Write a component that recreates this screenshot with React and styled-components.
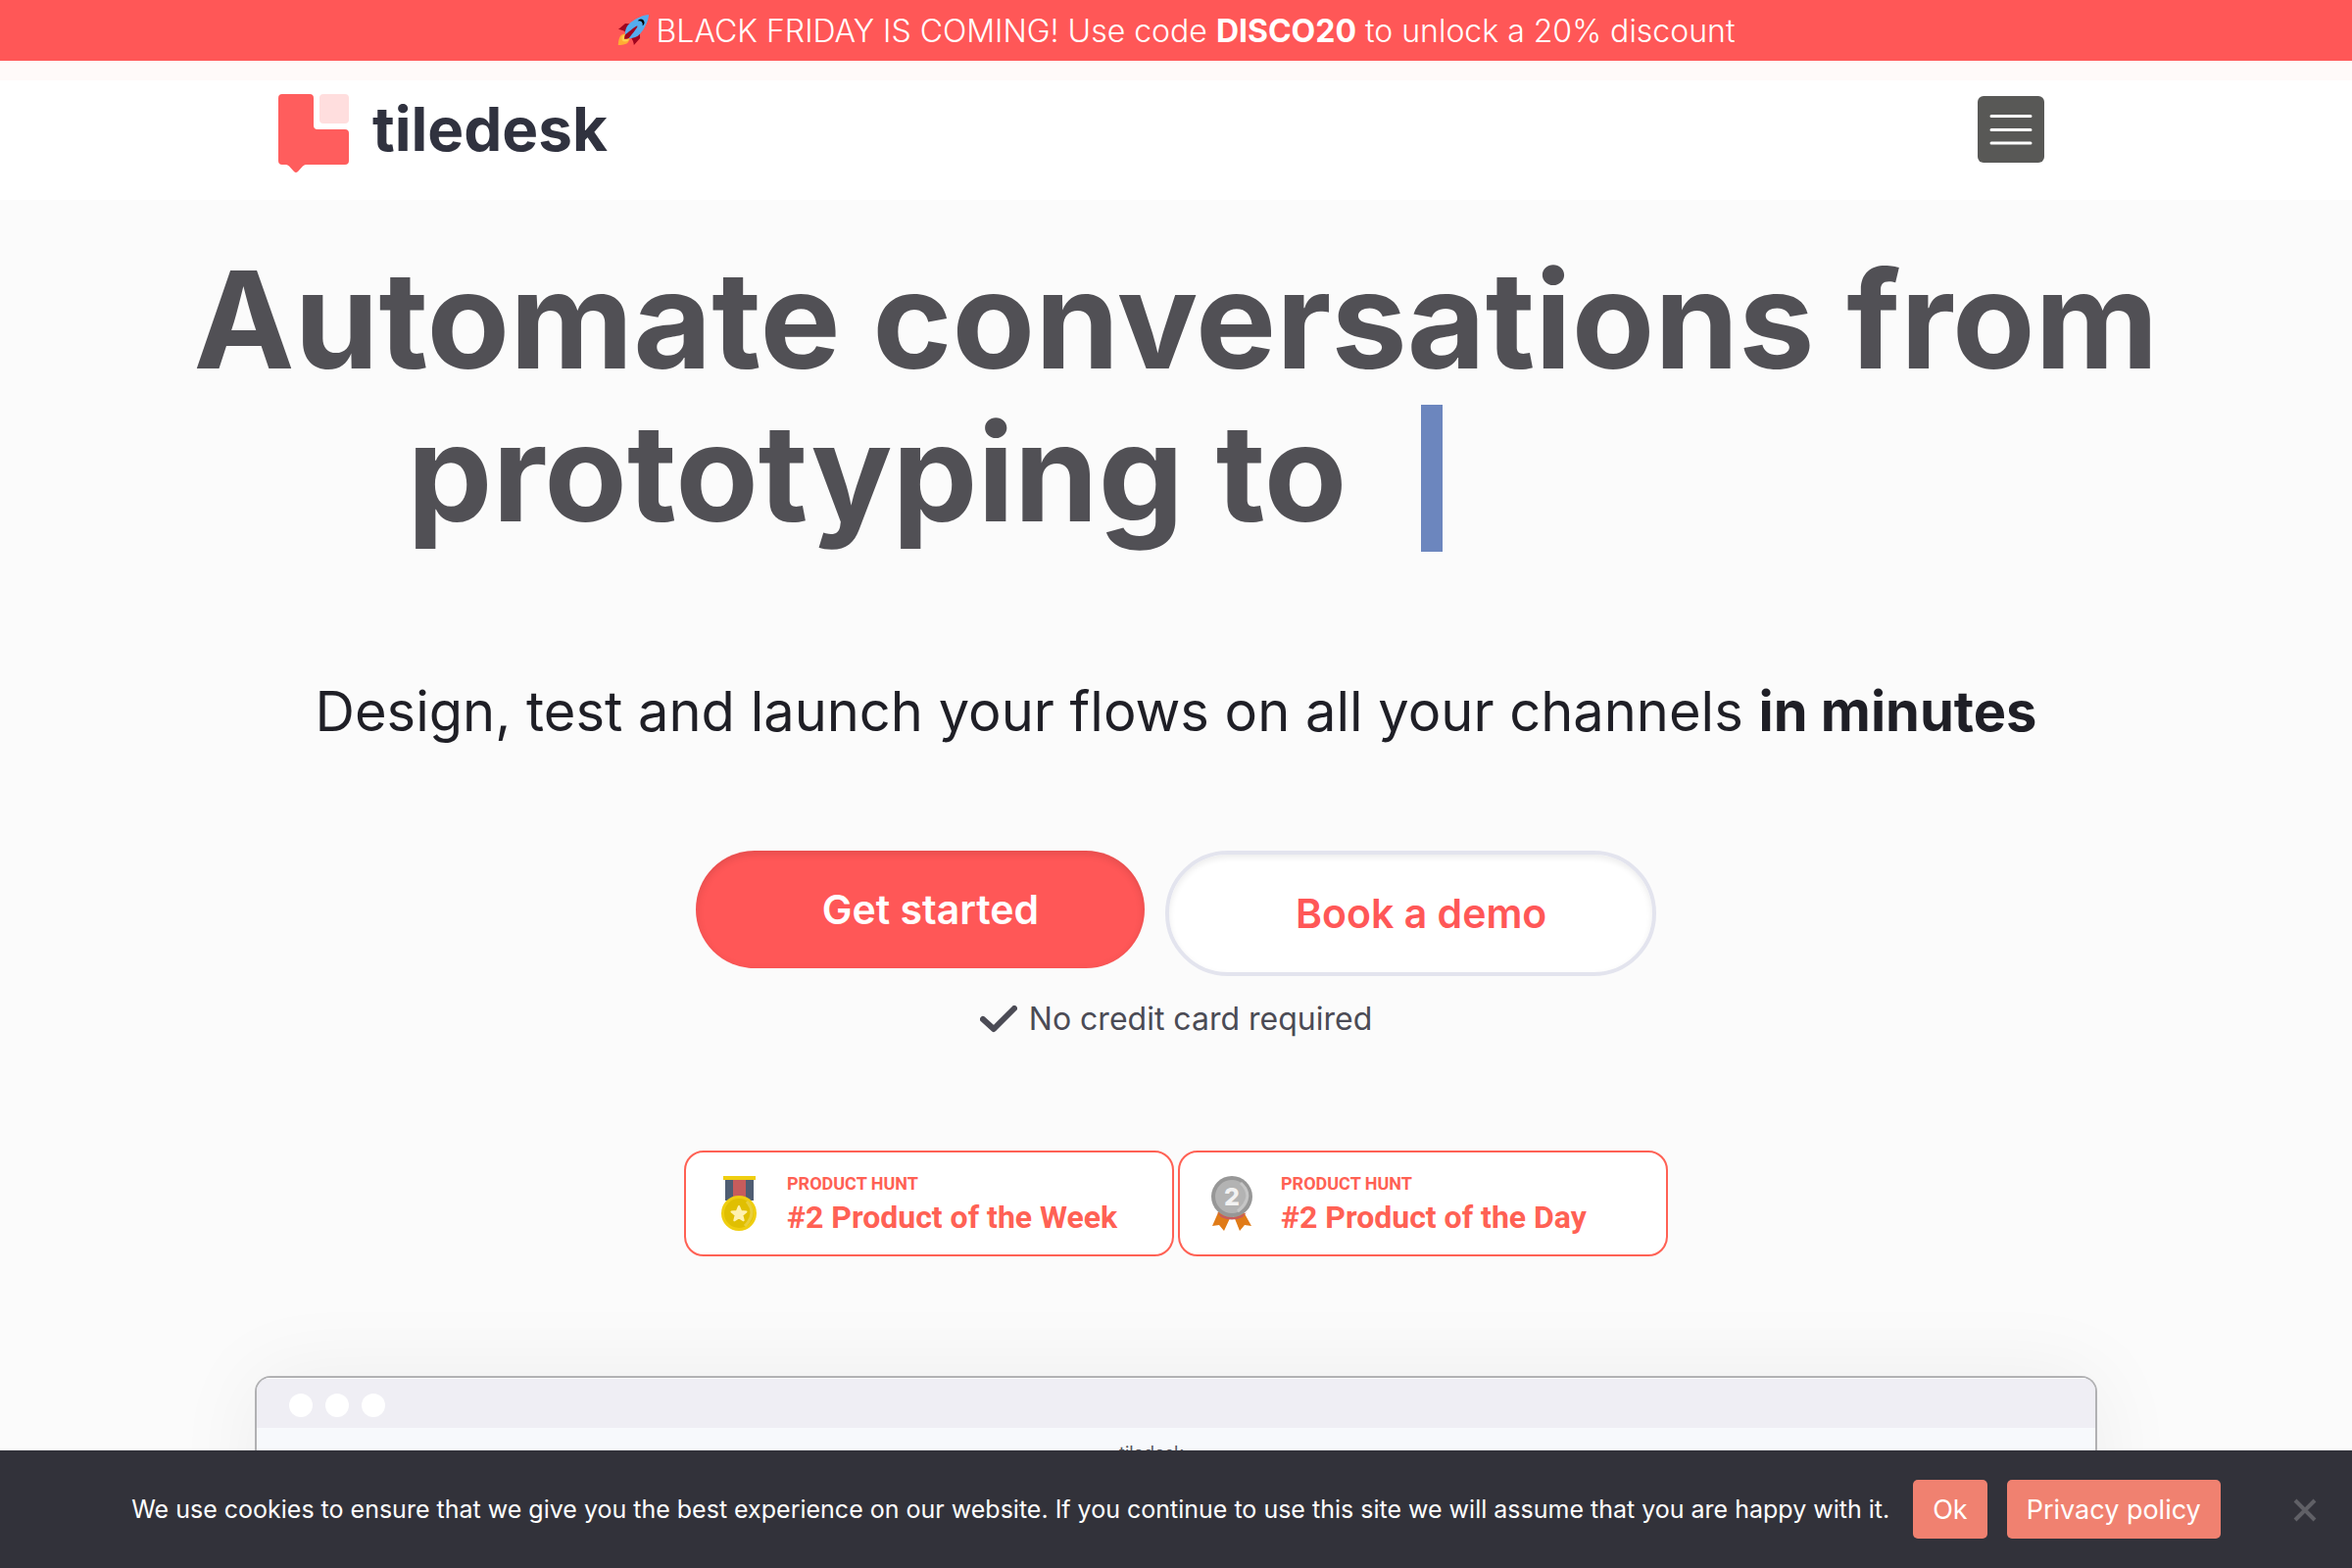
import styled, { createGlobalStyle } from 'styled-components';

const GlobalStyle = createGlobalStyle`
  *,
  *::before,
  *::after {
    box-sizing: border-box;
  }

  body {
    margin: 0;
    background: #fbfbfb;
    color: #1f1f26;
    font-family: Inter, 'Open Sans', sans-serif;
  }
`;

const Page = styled.div`
  display: flex;
  flex-direction: column;
  min-height: 100vh;
`;

const PromoBar = styled.div`
  display: flex;
  align-items: center;
  justify-content: center;
  gap: 8px;
  height: 62px;
  background: #ff5757;
  color: #fff;
  font-size: 32px;
  font-weight: 300;

  strong {
    font-weight: 700;
  }
`;

const Header = styled.header`
  border-top: 20px solid #fffaf9;
  background: #fff;
`;

const HeaderInner = styled.div`
  display: flex;
  align-items: flex-start;
  justify-content: space-between;
  max-width: 1832px;
  height: 122px;
  margin: 0 auto;
  padding: 14px 30px 0 0;
`;

const LogoLink = styled.a`
  display: flex;
  gap: 24px;
  color: #30323f;
  font-size: 62px;
  font-weight: 700;
  line-height: 72px;
  text-decoration: none;
`;

const MenuButton = styled.button`
  display: grid;
  place-items: center;
  width: 68px;
  height: 68px;
  margin-top: 2px;
  padding: 0;
  border: 0;
  border-radius: 6px;
  background: #585856;
`;

const Hero = styled.main`
  display: flex;
  flex: 1;
  flex-direction: column;
  align-items: center;
`;

const Title = styled.h1`
  margin: 44px 0 0;
  color: #515055;
  font-size: 138px;
  font-weight: 700;
  line-height: 156px;
  text-align: center;
  white-space: nowrap;
`;

const TypedLine = styled.span`
  display: flex;
  justify-content: center;
  gap: 76px;
  padding-right: 512px;
`;

const Caret = styled.span`
  width: 22px;
  margin: 9px 0 -3px;
  background: #6c86be;
`;

const Subtitle = styled.p`
  margin: 126px 0 0;
  font-size: 56px;
  font-weight: 400;
  line-height: 80px;
  text-align: center;

  strong {
    font-weight: 700;
  }
`;

const Actions = styled.div`
  display: flex;
  align-items: flex-start;
  gap: 21px;
  margin-top: 102px;
`;

const ActionLink = styled.a`
  padding: 0 108px 0 129px;
  border-radius: 64px;
  background: #ff5757;
  box-shadow: inset 0 3px 8px rgba(0, 0, 0, 0.12);
  color: #fff;
  font-size: 41px;
  font-weight: 600;
  line-height: 120px;
  text-decoration: none;
`;

const OutlineLink = styled(ActionLink)`
  border: 4px solid #e3e4ee;
  background: #fff;
  box-shadow: inset 0 3px 6px rgba(0, 0, 0, 0.08);
  color: #ff5757;
`;

const Note = styled.p`
  display: flex;
  align-items: center;
  gap: 12px;
  margin: 24px 0 0;
  color: #4b4b55;
  font-size: 32px;
  font-weight: 400;
  line-height: 40px;
`;

const Badges = styled.div`
  display: flex;
  gap: 4px;
  margin-top: 114px;
`;

const Badge = styled.a`
  display: flex;
  align-items: center;
  width: 500px;
  height: 108px;
  padding-left: 31px;
  border: 2px solid #ff6154;
  border-radius: 20px;
  background: #fff;
  color: #ff6154;
  font-family: Roboto, sans-serif;
  font-weight: 700;
  text-decoration: none;
`;

const BadgeText = styled.span`
  display: flex;
  flex-direction: column;
  margin-left: 24px;
`;

const BadgeLabel = styled.span`
  font-size: 18px;
  line-height: 28px;
`;

const BadgeTitle = styled.span`
  font-size: 32px;
  line-height: 40px;
`;

const Preview = styled.section`
  flex: 1;
  width: calc(100% - 520px);
  margin-top: 122px;
  border: 2px solid #b1b1b3;
  border-bottom: 0;
  border-radius: 16px 16px 0 0;
  background: #f7f9fc;
  box-shadow: 0 0 90px rgba(0, 0, 0, 0.06);
  overflow: hidden;
`;

const PreviewBar = styled.div`
  display: flex;
  align-items: center;
  gap: 13px;
  height: 51px;
  padding: 4px 0 0 33px;
  border-top: 1px solid #fff;
  background: #efeef4;
`;

const Dot = styled.span`
  width: 24px;
  height: 24px;
  border-radius: 50%;
  background: #fff;
`;

const PreviewName = styled.p`
  margin: 14px 0 0;
  color: #55565c;
  font-size: 18px;
  line-height: 24px;
  text-align: center;
  text-indent: -50px;
`;

const CookieBar = styled.div`
  position: fixed;
  right: 0;
  bottom: 0;
  left: 0;
  display: flex;
  align-items: center;
  justify-content: center;
  gap: 20px;
  height: 120px;
  background: #32323a;
  color: #fff;
  font-size: 25px;
`;

const CookieText = styled.span`
  margin-right: 4px;
`;

const CookieButton = styled.button`
  height: 60px;
  padding: 0 20px;
  border: 0;
  border-radius: 5px;
  background: #f08170;
  color: #fff;
  font-family: inherit;
  font-size: 27px;
  font-weight: 400;
`;

const CloseButton = styled.button`
  position: absolute;
  right: 36px;
  bottom: 47px;
  display: flex;
  padding: 0;
  border: 0;
  background: none;
`;

function Rocket() {
  return (
    <svg width="32" height="32" viewBox="0 0 36 36" aria-hidden="true">
      <path fill="#A0041E" d="M1 17l8-7 16 1 1 16-7 8s0-6-6-12-12-6-12-6z" />
      <path
        fill="#FFAC33"
        d="M.973 35s-.036-7.979 2.985-11S15 21.187 15 21.187 15 29 12 32c-3 3-11.027 3-11.027 3z"
      />
      <circle fill="#FFCC4D" cx="9" cy="27" r="4" />
      <path
        fill="#55ACEE"
        d="M36 0S26 0 14 10c-6 5-6 14-4 16s11 2 16-4C36 10 36 0 36 0z"
      />
      <path d="M27 5c-1.623 0-3.013.971-3.641 2.36C23.861 7.133 24.414 7 25 7c2.209 0 4 1.791 4 4 0 .586-.133 1.139-.359 1.64C30.03 12.013 31 10.623 31 9c0-2.209-1.791-4-4-4z" />
      <path
        fill="#A0041E"
        d="M8 28s0-4 1-5 13-11 14-10-9 13-10 14-5 1-5 1z"
      />
    </svg>
  );
}

function LogoMark() {
  return (
    <svg width="72" height="80" viewBox="0 0 72 80" aria-hidden="true">
      <path
        fill="#ff5d5d"
        d="M4 0H32a4 4 0 0 1 4 4V32a4 4 0 0 0 4 4H68a4 4 0 0 1 4 4V68a4 4 0 0 1-4 4H28Q26.500 72 25 73.500L20 79Q18 81 16 79L11 73.500Q9.500 72 8 72H4a4 4 0 0 1-4-4V4a4 4 0 0 1 4-4z"
      />
      <rect x="42" width="30" height="30" rx="4" fill="#ffdede" />
    </svg>
  );
}

function WeekMedal() {
  return (
    <svg width="48" height="56" viewBox="0 0 48 56" aria-hidden="true">
      <path fill="#4f5d73" d="M9 3h29v22H9z" />
      <path fill="#c75c5c" d="M17 3h13v22H17z" />
      <path fill="#efce10" d="M7 0h33v4H7z" />
      <circle cx="23" cy="38" r="18" fill="#efce10" />
      <circle cx="23" cy="38" r="15" fill="#e0bf02" />
      <path
        d="M31 26q11 12-2 25"
        fill="none"
        stroke="#e9cf3c"
        strokeWidth="3"
      />
      <path
        fill="#fff1b0"
        stroke="#fff1b0"
        strokeWidth="2"
        strokeLinejoin="round"
        d="M23 31l2.100 5 5.400.5-4.100 3.500 1.300 5.300-4.700-2.900-4.700 2.900 1.300-5.300-4.100-3.500 5.400-.5z"
      />
    </svg>
  );
}

function DayMedal() {
  return (
    <svg width="48" height="56" viewBox="0 0 48 56" aria-hidden="true">
      <path
        fill="#e07b18"
        d="M9 35L2 51l7-1 5 6 7-15zM33 35l9 16-7-1-5 6-6-15z"
      />
      <path fill="#c75c5c" d="M7 37q15 10 30 0l-4 5q-11 5-22 0z" />
      <circle cx="22" cy="21" r="21" fill="#979797" />
      <circle cx="22" cy="21" r="17" fill="#b3b3b3" />
      <path d="M31 7q15 14-3 29" fill="none" stroke="#c6c6c6" strokeWidth="3" />
      <text
        x="22"
        y="30"
        fill="#f2f2f2"
        fontFamily="Inter, sans-serif"
        fontSize="25"
        fontWeight="800"
        textAnchor="middle"
      >
        2
      </text>
    </svg>
  );
}

function CheckIcon() {
  return (
    <svg width="38" height="28" viewBox="0 0 38 28" aria-hidden="true">
      <path
        d="M3 14l11 10L35 3"
        fill="none"
        stroke="#4b4b55"
        strokeWidth="6"
        strokeLinecap="round"
        strokeLinejoin="round"
      />
    </svg>
  );
}

const badges = [
  { title: '#2 Product of the Week', Icon: WeekMedal },
  { title: '#2 Product of the Day', Icon: DayMedal },
];

function App() {
  return (
    <>
      <GlobalStyle />
      <Page>
        <PromoBar>
          <Rocket />
          <span>
            BLACK FRIDAY IS COMING! Use code <strong>DISCO20</strong> to unlock a
            20% discount
          </span>
        </PromoBar>
        <Header>
          <HeaderInner>
            <LogoLink href="#">
              <LogoMark />
              tiledesk
            </LogoLink>
            <MenuButton type="button" aria-label="Menu">
              <svg width="44" height="32" viewBox="0 0 44 32">
                <path
                  d="M2 4.500h40M2 18.500h40M2 32h40"
                  transform="translate(0 -2)"
                  stroke="#fff"
                  strokeWidth="3"
                  strokeLinecap="round"
                  overflow="visible"
                />
              </svg>
            </MenuButton>
          </HeaderInner>
        </Header>
        <Hero>
          <Title>
            Automate conversations from
            <TypedLine>
              prototyping to
              <Caret />
            </TypedLine>
          </Title>
          <Subtitle>
            Design, test and launch your flows on all your channels{' '}
            <strong>in minutes</strong>
          </Subtitle>
          <Actions>
            <ActionLink href="#">Get started</ActionLink>
            <OutlineLink href="#">Book a demo</OutlineLink>
          </Actions>
          <Note>
            <CheckIcon />
            No credit card required
          </Note>
          <Badges>
            {badges.map(({ title, Icon }) => (
              <Badge href="#" key={title}>
                <Icon />
                <BadgeText>
                  <BadgeLabel>PRODUCT HUNT</BadgeLabel>
                  <BadgeTitle>{title}</BadgeTitle>
                </BadgeText>
              </Badge>
            ))}
          </Badges>
          <Preview>
            <PreviewBar>
              <Dot />
              <Dot />
              <Dot />
            </PreviewBar>
            <PreviewName>tiledesk</PreviewName>
          </Preview>
        </Hero>
      </Page>
      <CookieBar>
        <CookieText>
          We use cookies to ensure that we give you the best experience on our
          website. If you continue to use this site we will assume that you are
          happy with it.
        </CookieText>
        <CookieButton type="button">Ok</CookieButton>
        <CookieButton type="button">Privacy policy</CookieButton>
        <CloseButton type="button" aria-label="Close">
          <svg width="24" height="24" viewBox="0 0 24 24">
            <path d="M2 2l20 20M22 2L2 22" stroke="#606066" strokeWidth="4" />
          </svg>
        </CloseButton>
      </CookieBar>
    </>
  );
}

export default App;
